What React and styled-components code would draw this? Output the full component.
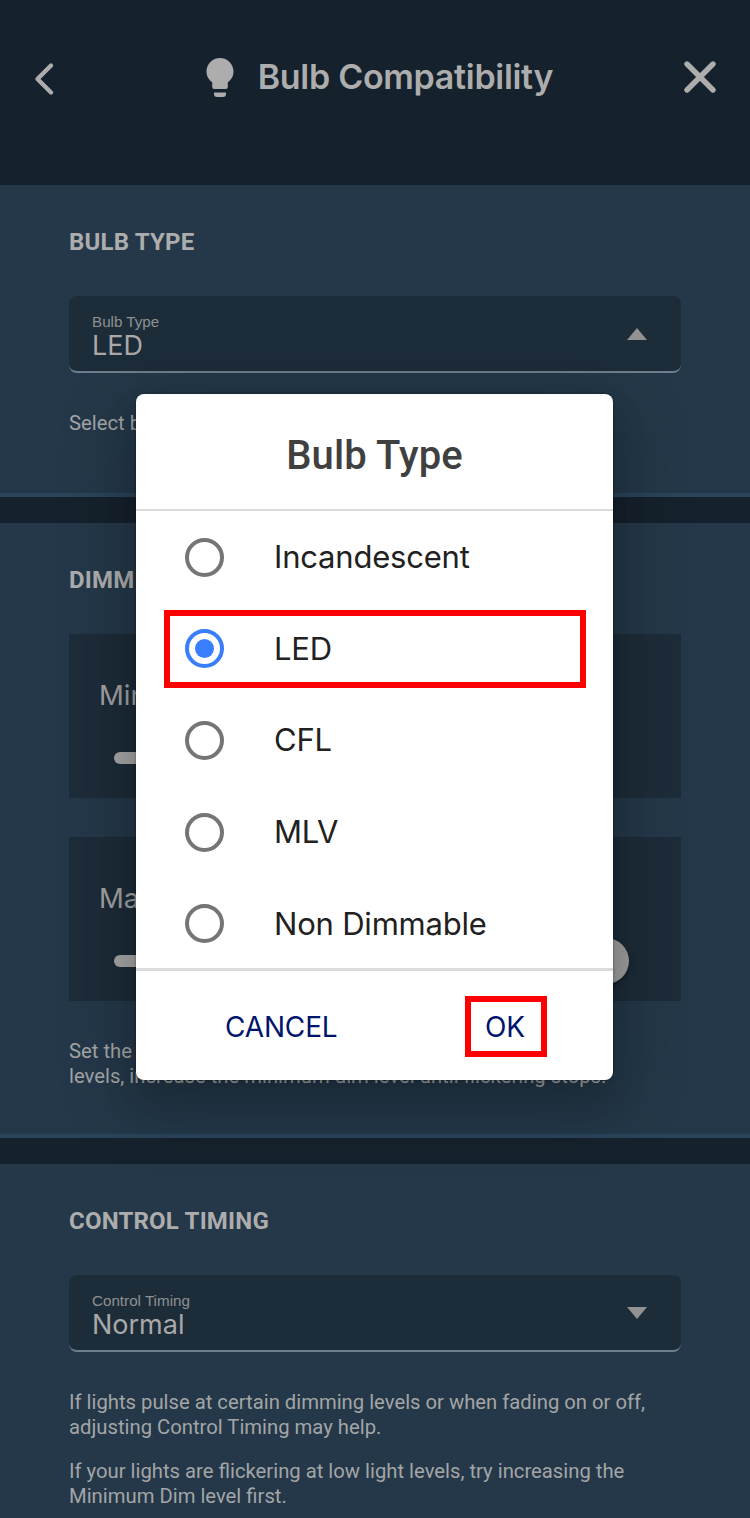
import React, { useState } from 'react';
import styled, { createGlobalStyle } from 'styled-components';

const GlobalStyle = createGlobalStyle`
  * {
    box-sizing: border-box;
  }

  body {
    margin: 0;
    background: #15212c;
    font-family: Roboto, sans-serif;
    color: #adadad;
    overflow: hidden;
  }

  h1,
  h2,
  p {
    margin: 0;
  }

  svg {
    display: block;
  }
`;

const Screen = styled.div`
  position: relative;
  width: 750px;
  height: 1518px;
  overflow: hidden;
`;

const Header = styled.header`
  display: flex;
  align-items: center;
  justify-content: space-between;
  height: 185px;
  padding: 0 32px 31px;
`;

const IconButton = styled.button`
  padding: ${({ $drop }) => $drop || 0}px 0 0;
  border: 0;
  background: none;
  cursor: pointer;
`;

const Heading = styled.div`
  display: flex;
  align-items: center;
  gap: 24px;
  margin-left: 21px;
`;

const Title = styled.h1`
  font: 600 34px/42px Inter, sans-serif;
  letter-spacing: -0.3px;
  white-space: nowrap;
`;

const Section = styled.section`
  height: ${({ $height }) => $height}px;
  margin-bottom: 26px;
  padding: 43px 69px 0;
  background: #243849;
  border-bottom: 4px solid #2a445a;
`;

const SectionTitle = styled.h2`
  font-size: 24px;
  font-weight: 700;
  line-height: 28px;
  letter-spacing: 0.2px;
  white-space: nowrap;
`;

const Select = styled.div`
  display: flex;
  align-items: center;
  justify-content: space-between;
  height: 77px;
  margin: 40px 0 38px;
  padding: 0 34px 0 23px;
  background: #1d2c39;
  border-bottom: 2px solid #6d7e8c;
  border-radius: 8px;
`;

const SelectLabel = styled.div`
  margin-top: 7px;
  font: 15.2px/18px 'Liberation Sans', sans-serif;
  color: #8e9192;
`;

const SelectValue = styled.div`
  font: 400 27px/30px Inter, sans-serif;
  color: #a9a9a9;
`;

const Help = styled.p`
  margin-bottom: 19px;
  font-size: 20.25px;
  line-height: 25px;
  color: #a3a5a6;
  white-space: nowrap;
`;

const Slider = styled.div`
  height: 164px;
  margin: 39px 0 38px;
  padding: 44px 75px 0 30px;
  background: #1d2c39;

  ${SectionTitle} + & {
    margin: 40px 0 0;
  }
`;

const SliderName = styled.div`
  font: 400 27.5px/34px Inter, sans-serif;
  color: #a3a3a3;
`;

const Track = styled.div`
  display: flex;
  align-items: center;
  justify-content: ${({ $end }) => ($end ? 'flex-end' : 'flex-start')};
  height: 12px;
  margin: 40px 0 0 15px;
  border-radius: 6px;
  background: #a8a8a8;
`;

const Thumb = styled.div`
  flex: none;
  width: 46px;
  height: 46px;
  margin: 0 -23px 0 30px;
  border-radius: 50%;
  background: #a1a1a1;
  box-shadow: 0 3px 5px rgba(0, 0, 0, 0.35);
`;

const Overlay = styled.div`
  position: absolute;
  inset: 0;
  padding: 394px 137px 0 136px;
`;

const Dialog = styled.div`
  display: flex;
  flex-direction: column;
  height: 686px;
  border-radius: 8px;
  background: #fff;
  color: #212121;
  box-shadow: 0 22px 30px 6px rgba(0, 0, 0, 0.1),
    0 18px 72px 10px rgba(0, 0, 0, 0.2), 0 0 3px rgba(0, 0, 0, 0.4);
`;

const DialogTitle = styled.h2`
  height: 117px;
  padding-top: 38px;
  border-bottom: 2px solid #dadada;
  font-size: 40px;
  font-weight: 500;
  line-height: 48px;
  letter-spacing: 0.1px;
  color: #404040;
  text-align: center;
`;

const Options = styled.div`
  display: flex;
  flex-direction: column;
  gap: 13.7px;
  height: 460px;
  padding: 7px 27px 0 28px;
  border-bottom: 3px solid #dadada;
`;

const Option = styled.div`
  display: flex;
  flex: none;
  align-items: center;
  gap: 50px;
  height: 78px;
  padding-left: 15px;
  border: 6px solid ${({ $marked }) => ($marked ? '#f00' : 'transparent')};
  font: 400 31px/38px Inter, sans-serif;
  letter-spacing: -0.2px;
  cursor: pointer;
`;

const Radio = styled.span`
  display: flex;
  align-items: center;
  justify-content: center;
  width: 39px;
  height: 39px;
  border: 4px solid ${({ $checked }) => ($checked ? '#397eff' : '#757575')};
  border-radius: 50%;

  &::after {
    content: '';
    width: 19px;
    height: 19px;
    border-radius: 50%;
    background: ${({ $checked }) => ($checked ? '#397eff' : 'transparent')};
  }
`;

const Actions = styled.div`
  display: flex;
  align-items: flex-start;
  justify-content: space-between;
  padding: 25px 66px 0 83px;
`;

const Action = styled.button`
  height: 61px;
  padding: ${({ $marked }) => ($marked ? '0 16px 0 14px' : 0)};
  border: 6px solid ${({ $marked }) => ($marked ? '#f00' : 'transparent')};
  background: none;
  font: 400 28px/34px Inter, sans-serif;
  letter-spacing: -0.15px;
  color: #00146b;
  cursor: pointer;
`;

const BULB_TYPES = ['Incandescent', 'LED', 'CFL', 'MLV', 'Non Dimmable'];

function BackIcon() {
  return (
    <svg width='24' height='34' viewBox='0 0 24 34' fill='none'>
      <path
        d='M19 3.500 5.500 17 19 30.500'
        stroke='#adadad'
        strokeWidth='4.400'
        strokeLinecap='round'
        strokeLinejoin='round'
      />
    </svg>
  );
}

function CloseIcon() {
  return (
    <svg width='36' height='36' viewBox='0 0 36 36' fill='none'>
      <path d='M5 5l26 26M31 5 5 31' stroke='#adadad' strokeWidth='5.400' strokeLinecap='round' />
    </svg>
  );
}

function BulbIcon() {
  return (
    <svg width='28' height='42' viewBox='0 0 28 42' fill='#adadad'>
      <path d='M14 2C6.500 2 .5 8 .5 15.500c0 5.500 2.800 8.500 5.700 10.800V31q0 2 2 2h11.600q2 0 2-2v-4.700c2.900-2.300 5.700-5.300 5.700-10.800C27.500 8 21.500 2 14 2Z' />
      <path d='M8 36.500h12V38q0 3-3 3h-6q-3 0-3-3Z' />
    </svg>
  );
}

function SelectField({ label, value, open }) {
  return (
    <Select>
      <div>
        <SelectLabel>{label}</SelectLabel>
        <SelectValue>{value}</SelectValue>
      </div>
      <svg width='20' height='12' viewBox='0 0 20 12' fill='#929292'>
        <path d={open ? 'M0 12 10 0l10 12Z' : 'M0 0h20L10 12Z'} />
      </svg>
    </Select>
  );
}

function SliderField({ name, end }) {
  return (
    <Slider>
      <SliderName>{name}</SliderName>
      <Track $end={end}>
        <Thumb />
      </Track>
    </Slider>
  );
}

function BulbTypeDialog({ value, onChange }) {
  return (
    <Overlay>
      <Dialog role='dialog'>
        <DialogTitle>Bulb Type</DialogTitle>
        <Options>
          {BULB_TYPES.map(type => (
            <Option key={type} $marked={type === value} onClick={() => onChange(type)}>
              <Radio $checked={type === value} />
              {type}
            </Option>
          ))}
        </Options>
        <Actions>
          <Action>CANCEL</Action>
          <Action $marked>OK</Action>
        </Actions>
      </Dialog>
    </Overlay>
  );
}

function App() {
  const [bulbType, setBulbType] = useState('LED');

  return (
    <Screen>
      <GlobalStyle />
      <Header>
        <IconButton aria-label='Back' $drop={3}>
          <BackIcon />
        </IconButton>
        <Heading>
          <BulbIcon />
          <Title>Bulb Compatibility</Title>
        </Heading>
        <IconButton aria-label='Close'>
          <CloseIcon />
        </IconButton>
      </Header>
      <Section $height={312}>
        <SectionTitle>BULB TYPE</SectionTitle>
        <SelectField label='Bulb Type' value={bulbType} open />
        <Help>Select bulb type.</Help>
      </Section>
      <Section $height={615}>
        <SectionTitle>DIMMING</SectionTitle>
        <SliderField name='Minimum' />
        <SliderField name='Maximum' end />
        <Help>
          Set the dimming range of your lights. If lights flicker at low
          <br />
          levels, increase the minimum dim level until flickering stops.
        </Help>
      </Section>
      <Section $height={380}>
        <SectionTitle>CONTROL TIMING</SectionTitle>
        <SelectField label='Control Timing' value='Normal' />
        <Help>
          If lights pulse at certain dimming levels or when fading on or off,
          <br />
          adjusting Control Timing may help.
        </Help>
        <Help>
          If your lights are flickering at low light levels, try increasing the
          <br />
          Minimum Dim level first.
        </Help>
      </Section>
      <BulbTypeDialog value={bulbType} onChange={setBulbType} />
    </Screen>
  );
}

export default App;
